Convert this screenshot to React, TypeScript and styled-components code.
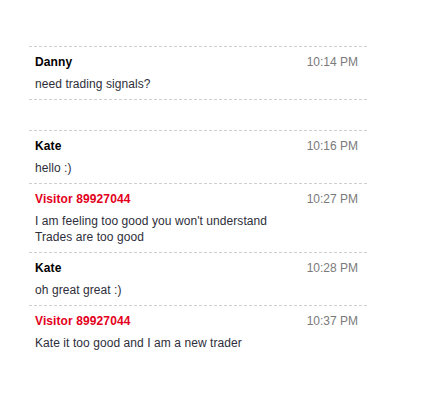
import React from "react";
import styled, { createGlobalStyle } from "styled-components";

const Global = createGlobalStyle`
  html, body { margin: 0; padding: 0; background: #fff; }
  body { font-family: "Liberation Sans", Arial, sans-serif; }
`;

const Page = styled.div`
  padding: 46px 0 0 29px;
  width: 338px;
`;

const Group = styled.div<{ $closed?: boolean }>`
  display: flex;
  flex-direction: column;
  ${(p) => (p.$closed ? "border-bottom: 1px dashed #cfcfcf; margin-bottom: 30px;" : "")}
`;

const Item = styled.div`
  border-top: 1px dashed #cfcfcf;
  padding: 6px 9px 7px 6px;
  display: flex;
  flex-direction: column;
  gap: 5px;
`;

const Head = styled.div`
  display: flex;
  justify-content: space-between;
  align-items: baseline;
  height: 18px;
  line-height: 18px;
  font-size: 12px;
`;

const Name = styled.span<{ $visitor?: boolean }>`
  font-weight: bold;
  letter-spacing: 0.1px;
  color: ${(p) => (p.$visitor ? "#e3001b" : "#000")};
`;

const Time = styled.span`
  color: #7a7a7a;
`;

const Text = styled.div`
  font-size: 12px;
  line-height: 16px;
  letter-spacing: 0.07px;
  color: #2e2e3a;
`;

type Msg = { name: string; time: string; lines: string[]; visitor?: boolean };

const first: Msg[] = [{ name: "Danny", time: "10:14 PM", lines: ["need trading signals?"] }];
const second: Msg[] = [
  { name: "Kate", time: "10:16 PM", lines: ["hello :)"] },
  {
    name: "Visitor 89927044",
    time: "10:27 PM",
    lines: ["I am feeling too good you won't understand", "Trades are too good"],
    visitor: true,
  },
  { name: "Kate", time: "10:28 PM", lines: ["oh great great :)"] },
  { name: "Visitor 89927044", time: "10:37 PM", lines: ["Kate it too good and I am a new trader"], visitor: true },
];

const Row = ({ m }: { m: Msg }) => (
  <Item>
    <Head>
      <Name $visitor={m.visitor}>{m.name}</Name>
      <Time>{m.time}</Time>
    </Head>
    <Text>
      {m.lines.map((l, i) => (
        <div key={i}>{l}</div>
      ))}
    </Text>
  </Item>
);

export default function App() {
  return (
    <>
      <Global />
      <Page>
        <Group $closed>
          {first.map((m, i) => (
            <Row key={i} m={m} />
          ))}
        </Group>
        <Group>
          {second.map((m, i) => (
            <Row key={i} m={m} />
          ))}
        </Group>
      </Page>
    </>
  );
}
